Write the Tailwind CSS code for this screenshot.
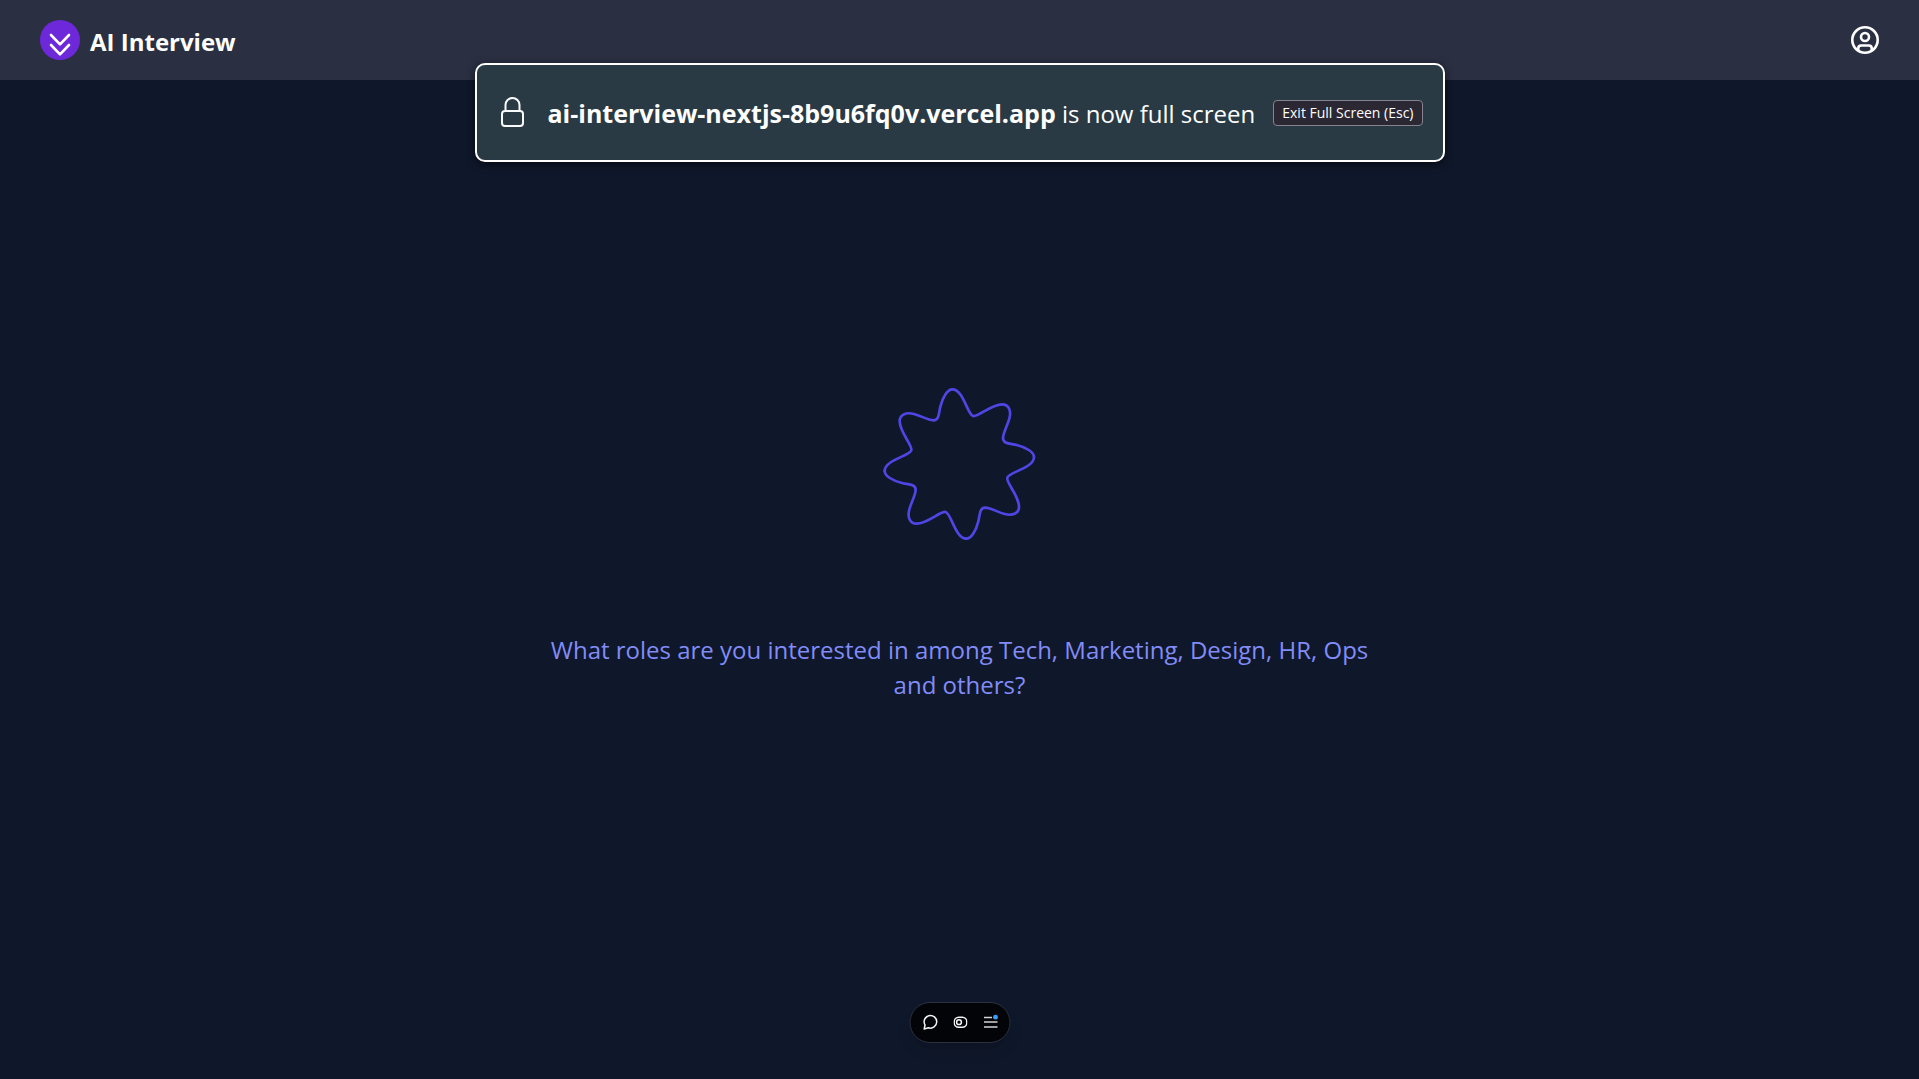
<!DOCTYPE html>
<html lang="en">
<head>
<meta charset="utf-8">
<meta name="viewport" content="width=device-width, initial-scale=1">
<title>AI Interview</title>
<script src="https://cdn.jsdelivr.net/npm/@tailwindcss/browser@4"></script>
</head>
<body class="flex min-h-screen flex-col bg-[#0f172a] font-['Open_Sans',sans-serif] text-white">
  <header class="flex h-20 items-center justify-between bg-[#2a2f42] px-10">
    <a href="#" class="flex items-center gap-2.5">
      <svg class="size-10" viewBox="0 0 40 40" fill="none" aria-hidden="true">
        <circle cx="20" cy="20" r="20" fill="#6d28d9"/>
        <path d="M11 15 20 24.300l9-9.300M11 25 20 34.300l9-9.300" stroke="#fff" stroke-width="2.600" stroke-linecap="round" stroke-linejoin="round"/>
      </svg>
      <span class="pt-1 text-2xl font-bold">AI Interview</span>
    </a>
    <button type="button" aria-label="Account" class="size-7">
      <svg class="size-7" viewBox="0 0 28 28" fill="none" stroke="#fff" stroke-width="2.600">
        <circle cx="14" cy="14" r="12.700"/>
        <circle cx="14" cy="11" r="4"/>
        <path d="M7.300 24.500v-2.200q0-2.800 2.800-2.800h7.800q2.800 0 2.800 2.800v2.200"/>
      </svg>
    </button>
  </header>

  <main class="flex flex-1 flex-col items-center px-6 pt-[294px]">
    <svg class="size-[180px]" viewBox="-268 -270 540 540" fill="none" stroke="#4f46e5" stroke-width="8" stroke-linecap="round" role="img" aria-label="Listening">
      <defs>
        <path id="lobe" d="M-21-224C12-224 24-149 41-144C55-139 95-179 128-179C150-179 156-158 150-136S132-95 131-78C131-60 152-62 172-57C200-50 224-36 224-21"/>
      </defs>
      <use href="#lobe"/>
      <use href="#lobe" transform="rotate(90)"/>
      <use href="#lobe" transform="rotate(180)"/>
      <use href="#lobe" transform="rotate(270)"/>
    </svg>
    <p class="mt-[78px] max-w-[840px] text-center text-2xl leading-[35px] text-[#818cf8]">What roles are you interested in among Tech, Marketing, Design, HR, Ops and others?</p>
  </main>

  <div role="status" class="absolute top-[63px] left-1/2 flex h-[99px] w-[970px] -translate-x-1/2 items-center rounded-[10px] border-2 border-white bg-[#2a3a45] pr-5 pl-[21px] whitespace-nowrap shadow-[0_2px_8px_rgba(0,0,0,0.6)]">
    <svg class="mr-[22px] h-8 w-7 shrink-0" viewBox="0 0 28 32" fill="none" stroke="#f8fafc" stroke-width="2" aria-hidden="true">
      <rect x="4" y="14" width="21" height="15" rx="3"/>
      <path d="M7.500 14V8a7 7 0 0 1 14 0v6"/>
    </svg>
    <p class="pt-0.5 text-2xl"><strong class="text-[25px] font-bold">ai-interview-nextjs-8b9u6fq0v.vercel.app</strong> is now full screen</p>
    <button type="button" class="ml-auto h-[26px] rounded-[4px] border border-[#85838f] bg-[#2b2833] px-2 text-sm leading-6">Exit Full Screen (Esc)</button>
  </div>

  <nav aria-label="Toolbar" class="absolute bottom-9 left-1/2 flex h-[41px] w-[101px] -translate-x-1/2 items-center justify-center gap-4 rounded-full border border-[#2c3140] bg-[#030408] pb-0.5 pl-0.5 shadow-lg">
    <button type="button" aria-label="Comments" class="size-3.5">
      <svg class="size-3.5 overflow-visible" viewBox="0 0 14 14" fill="none" stroke="#f4f4f5" stroke-width="1.500" stroke-linejoin="round"><path d="M.7 14 1.500 10A6.300 6.300 0 1 1 5 12.800Z"/></svg>
    </button>
    <button type="button" aria-label="Draft mode" class="size-3.5">
      <svg class="size-3.5" viewBox="0 0 14 14" fill="none" stroke="#f4f4f5" stroke-width="1.500"><rect x=".7" y="2.200" width="12.600" height="10" rx="4.500"/><circle cx="5.500" cy="7.200" r="2.400"/></svg>
    </button>
    <button type="button" aria-label="Menu" class="size-3.5">
      <svg class="size-3.5 overflow-visible" viewBox="0 0 14 14" fill="none" stroke="#d4d4d8" stroke-width="1.600"><path d="M.5 2.500h8M.5 7h13.500M.5 12h13.500"/><circle cx="12" cy="2.200" r="2.400" fill="#3b9eff" stroke="none"/></svg>
    </button>
  </nav>
</body>
</html>
